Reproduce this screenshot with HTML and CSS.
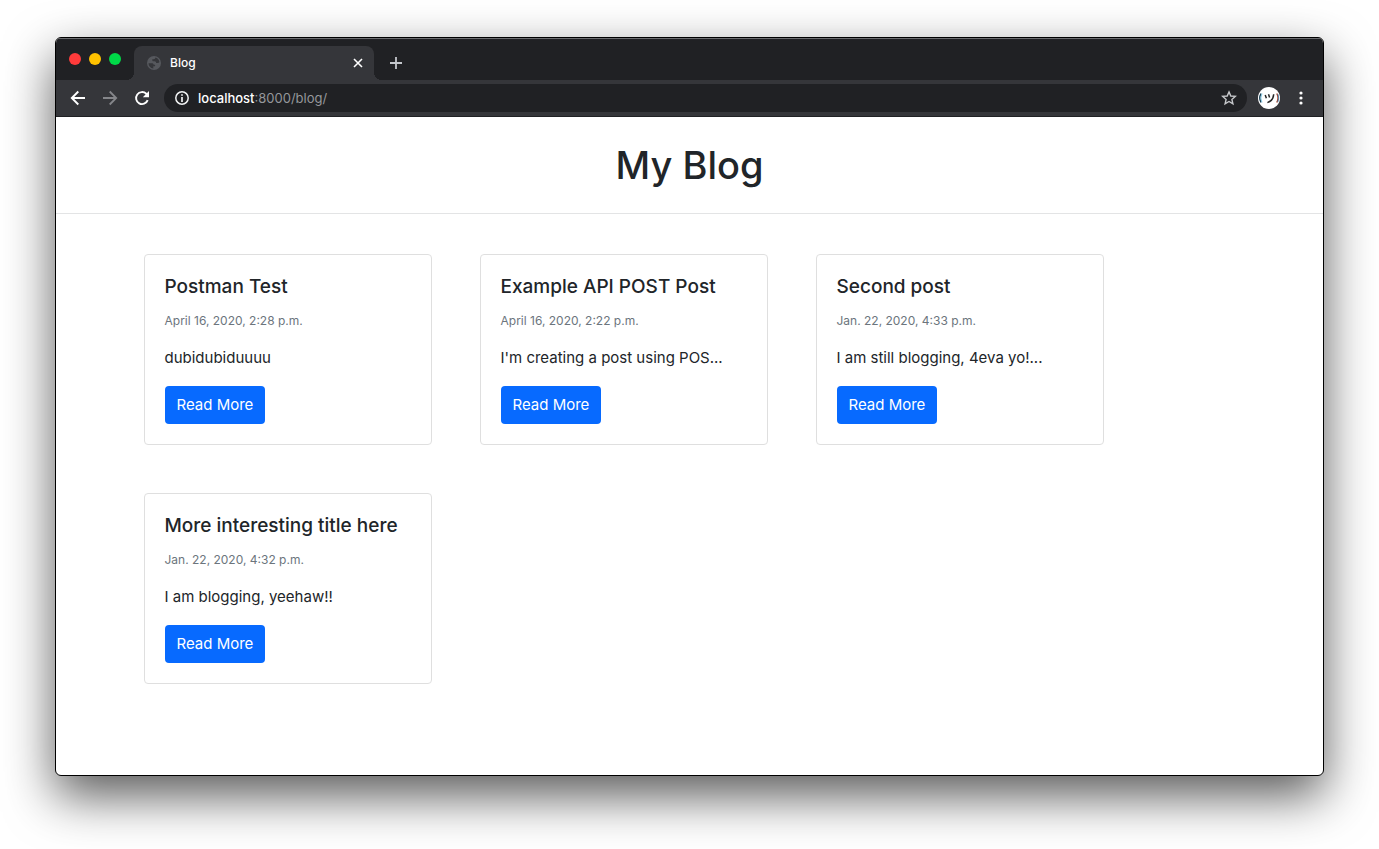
FILE: index.html
```html
<!DOCTYPE html>
<html lang="en">
<head>
<meta charset="utf-8">
<meta name="viewport" content="width=device-width, initial-scale=1">
<title>Blog</title>
<link rel="stylesheet" href="styles.css">
</head>
<body>
<div class="window">
  <div class="tab-strip">
    <div class="lights">
      <button class="light light-close" aria-label="Close window"></button>
      <button class="light light-min" aria-label="Minimize window"></button>
      <button class="light light-max" aria-label="Maximize window"></button>
    </div>
    <div class="tab">
      <svg class="favicon" viewBox="0 0 16 16" width="16" height="16" aria-hidden="true">
        <circle cx="8" cy="8" r="7" fill="#56585d"/>
        <path d="M2.500 8.200h3.200c1.300 0 2 .6 2 1.600h1.400v1.500H7.300v2.200c-2.800-.3-4.800-2.500-4.800-5.300zM9.300 2.600c0 1.200-.6 1.700-1.600 1.700H6.300v1.200c0 .6.5.8 1.200.8h1c1.200 0 1.600.8 1.600 1.700h1.300c1 0 1.500-.5 2-1.100A5.500 5.500 0 0 0 9.300 2.600z" fill="#35363a"/>
      </svg>
      <span class="tab-title">Blog</span>
      <button class="tab-close" aria-label="Close tab">
        <svg viewBox="0 0 10 10" width="10" height="10"><path d="M1 1l8 8M9 1L1 9" stroke="#fff" stroke-width="1.600" fill="none"/></svg>
      </button>
    </div>
    <button class="new-tab" aria-label="New tab">
      <svg viewBox="0 0 12 12" width="12" height="12"><path d="M6 0v12M0 6h12" stroke="#c4c7cc" stroke-width="1.800"/></svg>
    </button>
  </div>
  <div class="toolbar">
    <button class="tool" aria-label="Back">
      <svg viewBox="0 0 16 16" width="16" height="16"><path d="M15 8H2M8.300 1.500L1.800 8l6.500 6.500" stroke="#fff" stroke-width="1.900" fill="none"/></svg>
    </button>
    <button class="tool" aria-label="Forward">
      <svg viewBox="0 0 16 16" width="16" height="16"><path d="M1 8h13M7.700 1.500L14.200 8l-6.500 6.500" stroke="#85868a" stroke-width="1.800" fill="none"/></svg>
    </button>
    <button class="tool" aria-label="Reload">
      <svg viewBox="0 0 16 16" width="16" height="16"><path d="M13.700 10.200A6 6 0 1 1 12.300 3.800L13.500 5" stroke="#fff" stroke-width="1.900" fill="none"/><path d="M15 1v6.200H8.800z" fill="#fff"/></svg>
    </button>
    <div class="address">
      <svg viewBox="0 0 14 14" width="14" height="14" aria-hidden="true"><circle cx="7" cy="7" r="6.200" stroke="#f1f3f4" stroke-width="1.500" fill="none"/><path d="M7 3.200v1.600M7 6v5" stroke="#f1f3f4" stroke-width="1.700"/></svg>
      <a class="url" href="#"><span class="host">localhost</span>:8000/blog/</a>
      <button class="star" aria-label="Bookmark">
        <svg viewBox="0 0 16 16" width="16" height="16"><path d="M8 1.900l1.800 4.100 4.500.4-3.400 3 1 4.400L8 11.500l-3.900 2.300 1-4.400-3.400-3 4.500-.4z" stroke="#c6c8cb" stroke-width="1.400" fill="none"/></svg>
      </button>
    </div>
    <button class="avatar" aria-label="Profile">
      <svg viewBox="0 0 22 22" width="22" height="22"><circle cx="11" cy="11" r="11" fill="#fff"/><path d="M3 6.500Q.5 11 3 15.500" stroke="#173c52" stroke-width="1.400" fill="none"/><path d="M4 6.500Q1.700 11 4 15.500" stroke="#62bde0" stroke-width=".7" fill="none"/><path d="M18.800 6.500Q21.300 11 18.800 15.500" stroke="#a33b24" stroke-width="1.400" fill="none"/><path d="M19.900 7Q21.700 11 19.900 15" stroke="#3187bb" stroke-width=".8" fill="none"/><path d="M7.200 8l1.200 3.200M10.500 7.200l1.100 3.200M15.700 7.200c-.3 4.600-2.500 7.300-6.300 8.400" stroke="#272727" stroke-width="1.500" fill="none"/></svg>
    </button>
    <button class="menu" aria-label="Menu">
      <svg viewBox="0 0 4 14" width="4" height="14"><g fill="#fff"><circle cx="2" cy="2" r="1.600"/><circle cx="2" cy="7" r="1.600"/><circle cx="2" cy="12" r="1.600"/></g></svg>
    </button>
  </div>
  <div class="page">
    <header class="page-header"><h1>My Blog</h1></header>
    <main class="posts">
      <article class="card">
        <h2>Postman Test</h2>
        <time>April 16, 2020, 2:28 p.m.</time>
        <p>dubidubiduuuu</p>
        <a class="read-more" href="#">Read More</a>
      </article>
      <article class="card">
        <h2>Example API POST Post</h2>
        <time>April 16, 2020, 2:22 p.m.</time>
        <p>I'm creating a post using POS...</p>
        <a class="read-more" href="#">Read More</a>
      </article>
      <article class="card">
        <h2>Second post</h2>
        <time>Jan. 22, 2020, 4:33 p.m.</time>
        <p>I am still blogging, 4eva yo!...</p>
        <a class="read-more" href="#">Read More</a>
      </article>
      <article class="card">
        <h2>More interesting title here</h2>
        <time>Jan. 22, 2020, 4:32 p.m.</time>
        <p>I am blogging, yeehaw!!</p>
        <a class="read-more" href="#">Read More</a>
      </article>
    </main>
  </div>
</div>
</body>
</html>
```

FILE: styles.css
```css
* {
  box-sizing: border-box;
}

body {
  display: flex;
  min-height: 100vh;
  margin: 0;
  padding: 37px 55px 73px;
  background: #fff;
  color: #212529;
  font: 15px/24px Inter, "Liberation Sans", sans-serif;
}

button {
  display: flex;
  align-items: center;
  justify-content: center;
  padding: 0;
  border: 0;
  background: none;
}

svg {
  display: block;
  flex: none;
}

.window {
  display: flex;
  flex: 1;
  flex-direction: column;
  overflow: clip;
  border: 1px solid #000;
  border-radius: 6px;
  background: #fff;
  box-shadow: 0 20px 50px rgba(0, 0, 0, 0.65);
}

.tab-strip {
  display: flex;
  align-items: flex-end;
  height: 42px;
  border-top: 1px solid #6b6c6f;
  background: #202124;
}

.lights {
  display: flex;
  gap: 8px;
  width: 78px;
  height: 34px;
  padding: 7px 0 0 13px;
}

.light {
  width: 12px;
  height: 12px;
  border-radius: 50%;
}

.light-close {
  background: #ff3b3b;
}

.light-min {
  background: #ffc200;
}

.light-max {
  background: #00d948;
}

.tab {
  position: relative;
  display: flex;
  align-items: center;
  gap: 8px;
  width: 240px;
  height: 34px;
  padding: 0 8px 0 12px;
  border-radius: 8px 8px 0 0;
  background: #35363a;
}

.tab::before,
.tab::after {
  position: absolute;
  bottom: 0;
  width: 8px;
  height: 8px;
  content: "";
}

.tab::before {
  right: 100%;
  background: radial-gradient(circle at 0 0, transparent 8px, #35363a 8px);
}

.tab::after {
  left: 100%;
  background: radial-gradient(circle at 100% 0, transparent 8px, #35363a 8px);
}

.tab-title {
  flex: 1;
  color: #fff;
  font-size: 12px;
  font-weight: 500;
}

.tab-close {
  width: 16px;
  height: 16px;
}

.new-tab {
  width: 28px;
  height: 34px;
  margin-left: 8px;
}

.toolbar {
  display: flex;
  align-items: center;
  height: 37px;
  padding: 0 12px 0 6px;
  border-bottom: 1px solid #202124;
  background: #35363a;
}

.tool {
  width: 32px;
  height: 32px;
}

.address {
  display: flex;
  flex: 1;
  align-items: center;
  gap: 9px;
  height: 28px;
  margin-left: 6px;
  padding: 0 10px 0 11px;
  border-radius: 14px;
  background: #202124;
}

.url {
  flex: 1;
  color: #95979b;
  font-size: 13px;
  text-decoration: none;
}

.host {
  color: #fff;
  font-weight: 500;
}

.avatar {
  margin-left: 11px;
}

.menu {
  width: 20px;
  height: 28px;
  margin-left: 11px;
}

.page {
  flex: 1;
}

.page-header {
  padding: 24px;
  border-bottom: 1px solid #e3e4e5;
  text-align: center;
}

h1 {
  margin: 0;
  font-size: 38px;
  font-weight: 500;
  line-height: 48px;
}

.posts {
  display: flex;
  flex-wrap: wrap;
  gap: 48px;
  max-width: 1140px;
  margin: 0 auto;
  padding: 40px 24px;
}

.card {
  width: 288px;
  padding: 20px;
  border: 1px solid #dfdfdf;
  border-radius: 4px;
}

.card h2 {
  margin: 0 0 12px;
  font-size: 19px;
  font-weight: 500;
  line-height: 24px;
}

.card time {
  display: block;
  color: #6c757d;
  font-size: 12px;
  line-height: 19px;
}

.card p {
  margin: 16px 0;
}

.read-more {
  display: inline-block;
  padding: 7px 12px;
  border-radius: 4px;
  background: #076aff;
  color: #fff;
  text-decoration: none;
  vertical-align: top;
}
```
